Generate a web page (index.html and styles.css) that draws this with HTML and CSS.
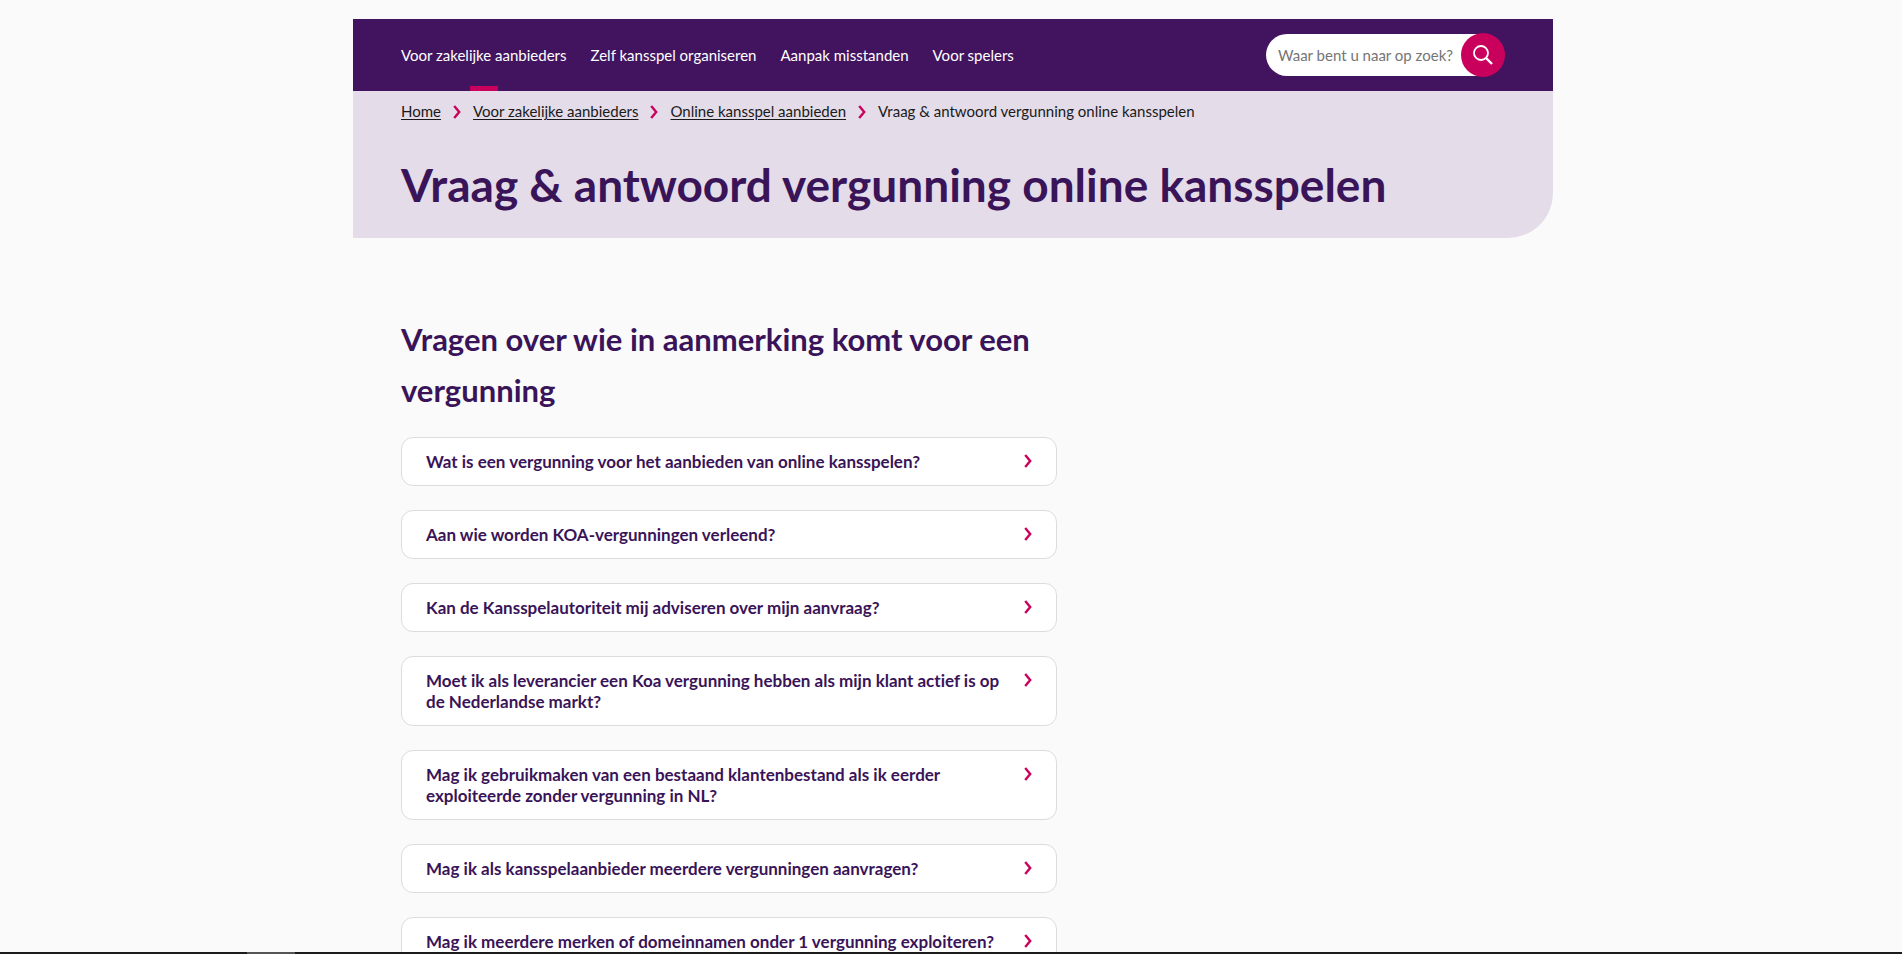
FILE: index.html
```html
<!DOCTYPE html>
<html lang="nl">
<head>
  <meta charset="UTF-8" />
  <meta name="viewport" content="width=device-width, initial-scale=1.0" />
  <title>Vraag &amp; antwoord vergunning online kansspelen</title>
  <link rel="stylesheet" href="styles.css">
</head>
<body>
  <svg width="0" height="0" class="sprite" aria-hidden="true">
    <symbol id="chevron" viewBox="0 0 8 14">
      <path d="M1.2 1 L6.2 7 L1.2 13" fill="none" stroke="currentColor" stroke-width="2.4" />
    </symbol>
  </svg>

  <div class="page">
    <header class="top-bar">
      <nav class="main-nav">
        <a href="#" class="active">Voor zakelijke aanbieders</a>
        <a href="#">Zelf kansspel organiseren</a>
        <a href="#">Aanpak misstanden</a>
        <a href="#">Voor spelers</a>
      </nav>
      <form class="search">
        <input type="search" aria-label="Zoeken" placeholder="Waar bent u naar op zoek?">
        <button type="button" aria-label="Zoek">
          <svg width="20" height="20" viewBox="0 0 20 20" fill="none" stroke="#fff" stroke-width="1.8">
            <circle cx="8" cy="8" r="7" />
            <path d="M13 13 L19 19" stroke-width="2.4" />
          </svg>
        </button>
      </form>
    </header>

    <div class="hero">
      <nav class="breadcrumb" aria-label="Kruimelpad">
        <a href="#">Home</a>
        <svg class="chevron"><use href="#chevron" /></svg>
        <a href="#">Voor zakelijke aanbieders</a>
        <svg class="chevron"><use href="#chevron" /></svg>
        <a href="#">Online kansspel aanbieden</a>
        <svg class="chevron"><use href="#chevron" /></svg>
        <span>Vraag &amp; antwoord vergunning online kansspelen</span>
      </nav>
      <h1>Vraag &amp; antwoord vergunning online kansspelen</h1>
    </div>

    <main class="content">
      <h2>Vragen over wie in aanmerking komt voor een vergunning</h2>
      <div class="faq">
        <details>
          <summary><span>Wat is een vergunning voor het aanbieden van online kansspelen?</span><svg class="chevron"><use href="#chevron" /></svg></summary>
        </details>
        <details>
          <summary><span>Aan wie worden KOA-vergunningen verleend?</span><svg class="chevron"><use href="#chevron" /></svg></summary>
        </details>
        <details>
          <summary><span>Kan de Kansspelautoriteit mij adviseren over mijn aanvraag?</span><svg class="chevron"><use href="#chevron" /></svg></summary>
        </details>
        <details>
          <summary><span>Moet ik als leverancier een Koa vergunning hebben als mijn klant actief is op de Nederlandse markt?</span><svg class="chevron"><use href="#chevron" /></svg></summary>
        </details>
        <details>
          <summary><span>Mag ik gebruikmaken van een bestaand klantenbestand als ik eerder exploiteerde zonder vergunning in NL?</span><svg class="chevron"><use href="#chevron" /></svg></summary>
        </details>
        <details>
          <summary><span>Mag ik als kansspelaanbieder meerdere vergunningen aanvragen?</span><svg class="chevron"><use href="#chevron" /></svg></summary>
        </details>
        <details>
          <summary><span>Mag ik meerdere merken of domeinnamen onder 1 vergunning exploiteren?</span><svg class="chevron"><use href="#chevron" /></svg></summary>
        </details>
      </div>
    </main>
  </div>

  <div class="bottom-strip"></div>
</body>
</html>
```
FILE: styles.css
```css
* { margin: 0; padding: 0; box-sizing: border-box; }

html, body { height: 100%; overflow: hidden; }

body {
  padding-left: 4px;
  font-family: Lato, "Open Sans", sans-serif;
  font-size: 16px;
  font-variant-ligatures: none;
  line-height: 21px;
  background: #fafafa;
  color: #1a1a1a;
}

.sprite { position: absolute; }

.page {
  max-width: 1200px;
  margin: 0 auto;
  padding-top: 19px;
}

.top-bar {
  display: flex; justify-content: space-between; align-items: center;
  height: 72px;
  padding: 0 48px;
  background: #42145f;
}

.main-nav { display: flex; gap: 24px; height: 100%; }
.main-nav a {
  position: relative;
  display: flex; align-items: center;
  color: #fff; text-decoration: none;
  font-size: 15px;
}
.main-nav a.active::after {
  content: "";
  position: absolute; bottom: 0; left: 50%;
  width: 28px; height: 5px;
  margin-left: -14px;
  background: #ca005d;
}

.search { display: flex; align-items: center; }
.search input {
  width: 217px; height: 42px;
  padding: 0 12px;
  border: 0; border-radius: 21px 0 0 21px;
  background: #fff;
  font: inherit; font-size: 15px;
}
.search input::placeholder { color: #757575; opacity: 1; }
.search button {
  display: flex; align-items: center; justify-content: center;
  width: 44px; height: 44px;
  margin-left: -22px;
  border: 0; border-radius: 50%;
  background: #ca005d;
  cursor: pointer;
}

.hero {
  padding: 10px 48px 23px;
  background: #e4dce8;
  border-bottom-right-radius: 45px;
}

.breadcrumb { display: flex; align-items: center; gap: 12px; font-size: 15px; }
.breadcrumb a { color: inherit; text-underline-offset: 2px; }

.chevron {
  flex: none;
  width: 8px; height: 14px;
  color: #ca005d;
}

h1, h2, summary { color: #3a1458; font-weight: bold; }

h1 {
  margin-top: 33px;
  font-size: 46px; line-height: 60px;
}

.content { max-width: 752px; padding: 76px 48px 0; }

h2 { font-size: 31px; line-height: 51px; }

.faq { display: grid; gap: 24px; margin-top: 21px; }
.faq details {
  background: #fff;
  border: 1px solid #dcdce0;
  border-radius: 12px;
}
.faq summary {
  display: flex; justify-content: space-between; align-items: flex-start; gap: 16px;
  padding: 13px 24px;
  list-style: none;
  font-size: 17px;
  cursor: pointer;
}
.faq .chevron { margin-top: 3px; }
.faq details[open] .chevron { transform: rotate(90deg); }

.bottom-strip {
  position: fixed; left: 0; right: 0; bottom: 0;
  height: 2px;
  background: linear-gradient(to right, #1c1a1d 247px, #555 247px, #555 295px, #1c1a1d 295px);
}
```
